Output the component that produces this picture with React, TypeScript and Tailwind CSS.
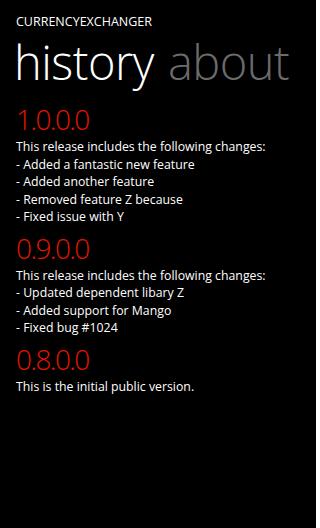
const releases = [
  {
    version: "1.0.0.0",
    lines: [
      "This release includes the following changes:",
      "- Added a fantastic new feature",
      "- Added another feature",
      "- Removed feature Z because",
      "- Fixed issue with Y",
    ],
  },
  {
    version: "0.9.0.0",
    lines: [
      "This release includes the following changes:",
      "- Updated dependent libary Z",
      "- Added support for Mango",
      "- Fixed bug #1024",
    ],
  },
  {
    version: "0.8.0.0",
    lines: ["This is the initial public version."],
  },
]

export default function App() {
  return (
    <div
      className="w-[316px] h-[528px] bg-black text-white overflow-hidden"
      style={{ fontFamily: '"Open Sans", "Noto Sans", sans-serif' }}
    >
      <div className="pl-4 pt-[14px] text-[12.5px] leading-[16px]">CURRENCYEXCHANGER</div>

      <div className="flex gap-[14px] pl-[14px] mt-[6px] text-[47px] leading-[52px] font-light tracking-[-0.5px] whitespace-nowrap">
        <span className="text-white">history</span>
        <span className="text-[#6b6b6b]">about</span>
      </div>

      <div className="pl-4 mt-[14px] flex flex-col gap-[5px]">
        {releases.map((r) => (
          <div key={r.version} className="flex flex-col">
            <div className="text-[28px] leading-[34px] font-light tracking-[-1.6px] text-[#e51400] mb-[2px]">
              {r.version}
            </div>
            {r.lines.map((line, i) => (
              <div key={i} className="text-[12.3px] leading-[17.5px] whitespace-nowrap">
                {line}
              </div>
            ))}
          </div>
        ))}
      </div>
    </div>
  )
}
